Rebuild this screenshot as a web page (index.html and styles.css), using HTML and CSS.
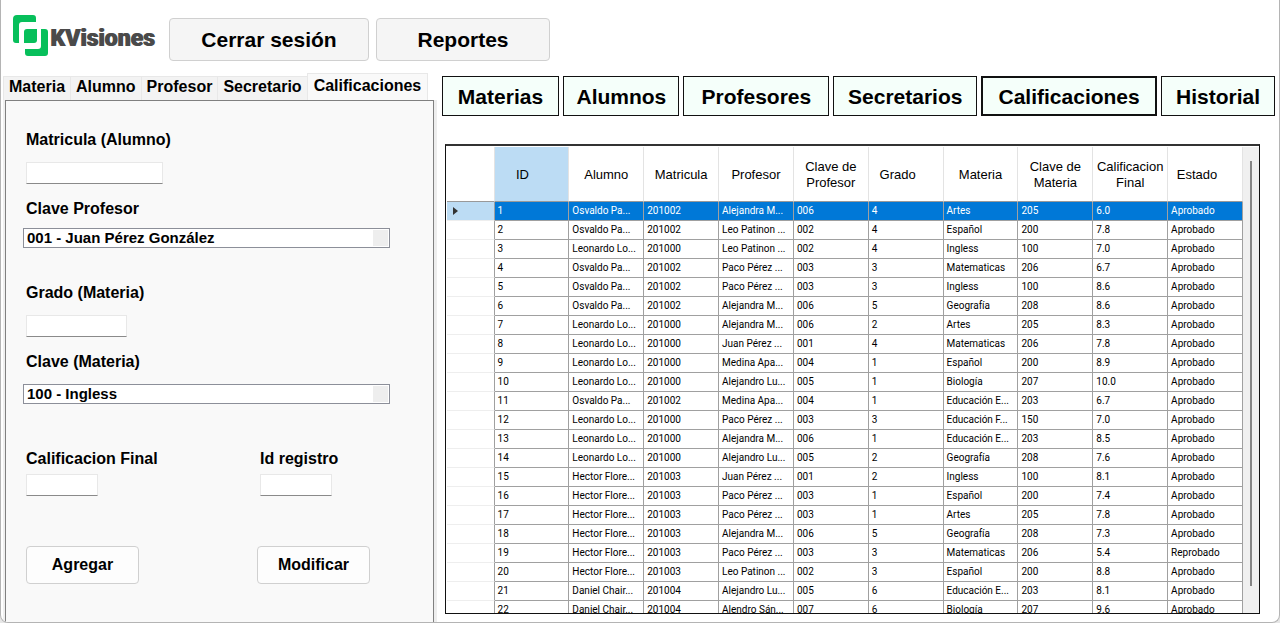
FILE: index.html
```html
<!DOCTYPE html>
<html lang="es">
<head>
<meta charset="utf-8">
<title>KVisiones</title>
<link rel="stylesheet" href="styles.css">
</head>
<body>
<div class="window">
  <header class="topbar">
    <div class="brand">
      <svg class="brand-mark" viewBox="0 0 36 42" aria-hidden="true">
        <path d="M4 0H20Q23 0 23 3V7H9Q6 7 6 10V28H3Q0 28 0 25V4Q0 0 4 0Z" fill="#07bf5b"/>
        <path d="M14 14H24V25Q24 28 21 28H11V17Q11 14 14 14Z" fill="#07bf5b"/>
        <path d="M28 14H32Q35 14 35 17V38Q35 41 32 41H15Q12 41 12 38V34H25Q28 34 28 31Z" fill="#07bf5b"/>
      </svg>
      <span class="brand-name">KVisiones</span>
    </div>
    <button class="top-button logout" type="button">Cerrar sesión</button>
    <button class="top-button reports" type="button">Reportes</button>
  </header>

  <main class="workspace">
    <section class="editor">
      <div class="tabs" role="tablist">
        <button class="tab" role="tab" type="button">Materia</button>
        <button class="tab" role="tab" type="button">Alumno</button>
        <button class="tab" role="tab" type="button">Profesor</button>
        <button class="tab" role="tab" type="button">Secretario</button>
        <button class="tab active" role="tab" type="button" aria-selected="true">Calificaciones</button>
      </div>
      <form class="panel">
        <div class="field">
          <label for="matricula">Matricula (Alumno)</label>
          <input class="wide" id="matricula" type="text">
        </div>
        <div class="field combo">
          <label for="profesor">Clave Profesor</label>
          <select id="profesor"><option>001 - Juan Pérez González</option></select>
        </div>
        <div class="field">
          <label for="grado">Grado (Materia)</label>
          <input class="medium" id="grado" type="text">
        </div>
        <div class="field combo spaced">
          <label for="materia">Clave (Materia)</label>
          <select id="materia"><option>100 - Ingless</option></select>
        </div>
        <div class="pair result">
          <div class="field tight">
            <label for="final">Calificacion Final</label>
            <input class="short" id="final" type="text">
          </div>
          <div class="field tight">
            <label for="registro">Id registro</label>
            <input class="short" id="registro" type="text">
          </div>
        </div>
        <div class="pair actions">
          <button class="action" type="button">Agregar</button>
          <button class="action" type="button">Modificar</button>
        </div>
      </form>
    </section>

    <section class="browser">
      <nav class="views">
        <button class="view" type="button">Materias</button>
        <button class="view" type="button">Alumnos</button>
        <button class="view" type="button">Profesores</button>
        <button class="view" type="button">Secretarios</button>
        <button class="view current" type="button">Calificaciones</button>
        <button class="view" type="button">Historial</button>
      </nav>
      <div class="grid-box">
        <table class="records">
          <colgroup><col class="marker-col"><col span="10"></colgroup>
          <thead>
            <tr>
              <td></td><th class="sorted">ID</th><th>Alumno</th><th>Matricula</th><th>Profesor</th><th>Clave de Profesor</th><th class="glyph-space">Grado</th><th>Materia</th><th>Clave de Materia</th><th>Calificacion Final</th><th class="glyph-space">Estado</th>
            </tr>
          </thead>
          <tbody>
            <tr class="selected"><td><svg class="marker" viewBox="0 0 5 8" aria-hidden="true"><path d="M0 0L5 4L0 8Z" fill="#333"/></svg></td><td>1</td><td>Osvaldo Pa...</td><td>201002</td><td>Alejandra M...</td><td>006</td><td>4</td><td>Artes</td><td>205</td><td>6.0</td><td>Aprobado</td></tr>
            <tr><td></td><td>2</td><td>Osvaldo Pa...</td><td>201002</td><td>Leo Patinon ...</td><td>002</td><td>4</td><td>Español</td><td>200</td><td>7.8</td><td>Aprobado</td></tr>
            <tr><td></td><td>3</td><td>Leonardo Lo...</td><td>201000</td><td>Leo Patinon ...</td><td>002</td><td>4</td><td>Ingless</td><td>100</td><td>7.0</td><td>Aprobado</td></tr>
            <tr><td></td><td>4</td><td>Osvaldo Pa...</td><td>201002</td><td>Paco Pérez ...</td><td>003</td><td>3</td><td>Matematicas</td><td>206</td><td>6.7</td><td>Aprobado</td></tr>
            <tr><td></td><td>5</td><td>Osvaldo Pa...</td><td>201002</td><td>Paco Pérez ...</td><td>003</td><td>3</td><td>Ingless</td><td>100</td><td>8.6</td><td>Aprobado</td></tr>
            <tr><td></td><td>6</td><td>Osvaldo Pa...</td><td>201002</td><td>Alejandra M...</td><td>006</td><td>5</td><td>Geografía</td><td>208</td><td>8.6</td><td>Aprobado</td></tr>
            <tr><td></td><td>7</td><td>Leonardo Lo...</td><td>201000</td><td>Alejandra M...</td><td>006</td><td>2</td><td>Artes</td><td>205</td><td>8.3</td><td>Aprobado</td></tr>
            <tr><td></td><td>8</td><td>Leonardo Lo...</td><td>201000</td><td>Juan Pérez ...</td><td>001</td><td>4</td><td>Matematicas</td><td>206</td><td>7.8</td><td>Aprobado</td></tr>
            <tr><td></td><td>9</td><td>Leonardo Lo...</td><td>201000</td><td>Medina Apa...</td><td>004</td><td>1</td><td>Español</td><td>200</td><td>8.9</td><td>Aprobado</td></tr>
            <tr><td></td><td>10</td><td>Leonardo Lo...</td><td>201000</td><td>Alejandro Lu...</td><td>005</td><td>1</td><td>Biología</td><td>207</td><td>10.0</td><td>Aprobado</td></tr>
            <tr><td></td><td>11</td><td>Osvaldo Pa...</td><td>201002</td><td>Medina Apa...</td><td>004</td><td>1</td><td>Educación E...</td><td>203</td><td>6.7</td><td>Aprobado</td></tr>
            <tr><td></td><td>12</td><td>Leonardo Lo...</td><td>201000</td><td>Paco Pérez ...</td><td>003</td><td>3</td><td>Educación F...</td><td>150</td><td>7.0</td><td>Aprobado</td></tr>
            <tr><td></td><td>13</td><td>Leonardo Lo...</td><td>201000</td><td>Alejandra M...</td><td>006</td><td>1</td><td>Educación E...</td><td>203</td><td>8.5</td><td>Aprobado</td></tr>
            <tr><td></td><td>14</td><td>Leonardo Lo...</td><td>201000</td><td>Alejandro Lu...</td><td>005</td><td>2</td><td>Geografía</td><td>208</td><td>7.6</td><td>Aprobado</td></tr>
            <tr><td></td><td>15</td><td>Hector Flore...</td><td>201003</td><td>Juan Pérez ...</td><td>001</td><td>2</td><td>Ingless</td><td>100</td><td>8.1</td><td>Aprobado</td></tr>
            <tr><td></td><td>16</td><td>Hector Flore...</td><td>201003</td><td>Paco Pérez ...</td><td>003</td><td>1</td><td>Español</td><td>200</td><td>7.4</td><td>Aprobado</td></tr>
            <tr><td></td><td>17</td><td>Hector Flore...</td><td>201003</td><td>Paco Pérez ...</td><td>003</td><td>1</td><td>Artes</td><td>205</td><td>7.8</td><td>Aprobado</td></tr>
            <tr><td></td><td>18</td><td>Hector Flore...</td><td>201003</td><td>Alejandra M...</td><td>006</td><td>5</td><td>Geografía</td><td>208</td><td>7.3</td><td>Aprobado</td></tr>
            <tr><td></td><td>19</td><td>Hector Flore...</td><td>201003</td><td>Paco Pérez ...</td><td>003</td><td>3</td><td>Matematicas</td><td>206</td><td>5.4</td><td>Reprobado</td></tr>
            <tr><td></td><td>20</td><td>Hector Flore...</td><td>201003</td><td>Leo Patinon ...</td><td>002</td><td>3</td><td>Español</td><td>200</td><td>8.8</td><td>Aprobado</td></tr>
            <tr><td></td><td>21</td><td>Daniel Chair...</td><td>201004</td><td>Alejandro Lu...</td><td>005</td><td>6</td><td>Educación E...</td><td>203</td><td>8.1</td><td>Aprobado</td></tr>
            <tr><td></td><td>22</td><td>Daniel Chair...</td><td>201004</td><td>Alendro Sán...</td><td>007</td><td>6</td><td>Biología</td><td>207</td><td>9.6</td><td>Aprobado</td></tr>
          </tbody>
        </table>
        <div class="scrollbar"><div class="thumb"></div></div>
      </div>
    </section>
  </main>
</div>
</body>
</html>
```
FILE: styles.css
```css
* { box-sizing: border-box; }

body {
  margin: 0;
  background: #e6e6e6;
  color: #000;
  font-family: "Liberation Sans", Arial, sans-serif;
}

button, input, select { font: inherit; color: inherit; }
button { padding: 0; font-weight: 700; }

.window {
  display: flex;
  flex-direction: column;
  height: 100vh;
  overflow: hidden;
  background: #fff;
  border: 1px solid #b4b4b4;
  border-top: 0;
  border-radius: 0 0 8px 8px;
}

/* Top bar */
.topbar {
  display: flex;
  flex: none;
  align-items: flex-start;
  height: 73px;
  padding: 15px 12px 0;
}

.brand { display: flex; width: 156px; }
.brand-mark { flex: none; width: 36px; height: 42px; }
.brand-name {
  padding: 11px 0 0 1px;
  font-size: 23px;
  line-height: 26px;
  font-family: Roboto, "Liberation Sans", sans-serif;
  font-weight: 900;
  color: #4a4a4a;
  text-shadow: 1px 0 #4a4a4a;
}

.top-button {
  height: 43px;
  margin-top: 3px;
  font-size: 21px;
  background: #f5f5f5;
  border: 1px solid #d0d0d0;
  border-radius: 4px;
}
.logout { width: 200px; }
.reports { width: 174px; margin-left: 7px; }

/* Workspace */
.workspace { display: flex; flex: 1; min-height: 0; }

.editor {
  display: flex;
  flex-direction: column;
  flex: none;
  width: 34%;
  min-width: 430px;
  padding: 0 2px;
}

.tabs { display: flex; align-items: flex-end; height: 27px; }
.tab {
  height: 24px;
  padding: 0 5px 3px;
  font-size: 16px;
  line-height: 20px;
  background: #f3f3f3;
  border: 1px solid #e8e8e8;
  border-width: 1px 0 0 1px;
}
.tab.active {
  height: 27px;
  padding: 0 6px 3px;
  background: #f9f9f9;
  border-right-width: 1px;
}

.panel {
  flex: 1;
  margin: 0 0 0 2px;
  padding: 29px 20px 0;
  background: #f9f9f9;
  border: 1px solid #808080;
  border-bottom: 0;
  box-shadow: 3px 0 0 #eee, -2px 0 0 #f0f0f0;
  font-size: 16px;
  line-height: 20px;
}

.field { display: flex; flex-direction: column; align-items: flex-start; gap: 12px; margin-bottom: 15px; }
.field label { font-weight: 700; }
.field input {
  height: 22px;
  padding: 0 4px;
  background: #fff;
  border: 1px solid #e8e8e8;
  border-bottom-color: #8a8a8a;
}
.field .wide { width: 137px; }
.field .medium { width: 101px; }
.field .short { width: 72px; }

.combo { gap: 9px; margin-bottom: 35px; }
.combo select {
  width: 367px;
  height: 20px;
  margin-left: -3px;
  padding: 0 20px 0 3px;
  appearance: none;
  font-size: 15px;
  font-weight: 700;
  line-height: 18px;
  background: linear-gradient(#eee, #eee) right 1px center / 15px 16px no-repeat #fff;
  border: 1px solid #8c8f99;
  border-radius: 0;
}
.spaced { gap: 12px; }

.pair { display: grid; grid-template-columns: 234px 1fr; }
.result { margin: 45px 0 50px; }
.actions { grid-template-columns: 231px 1fr; }
.tight { gap: 5px; margin: 0; }

.action {
  width: 113px;
  height: 38px;
  background: #fdfdfd;
  border: 1px solid #d0d0d0;
  border-radius: 4px;
}

/* Record browser */
.browser {
  display: flex;
  flex-direction: column;
  flex: 1;
  min-width: 0;
  padding: 3px 4px 8px 6px;
}

.views {
  display: grid;
  grid-template-columns: 118fr 116fr 146fr 144fr 176fr 114fr;
  gap: 4px;
}
.view {
  height: 40px;
  padding-top: 1px;
  font-size: 21px;
  background: #f5fffa;
  border: 1px solid #111;
}
.view.current { border-width: 2px; }

.grid-box {
  display: flex;
  flex: 1;
  align-items: flex-start;
  min-height: 0;
  margin: 28px 15px 0 3px;
  padding: 1px 0 0 1px;
  overflow: hidden;
  border: 1px solid #111;
  border-top: 2px solid #333;
}

.records {
  flex: 1;
  width: 100%;
  min-width: 0;
  table-layout: fixed;
  border-spacing: 0;
  border-collapse: separate;
}
.marker-col { width: 48px; }

.records th, .records thead td {
  height: 55px;
  padding: 1px 0 0;
  font-size: 13px;
  font-weight: 400;
  line-height: 16px;
  border-right: 1px solid #e3e3e3;
  border-bottom: 1px solid #999;
}
.records .sorted { padding-right: 18px; background: #bcdcf4; }
.records .glyph-space { padding-right: 16px; }

.records tbody td {
  height: 19px;
  padding: 0 3px;
  overflow: hidden;
  white-space: nowrap;
  font-family: Roboto, "Liberation Sans", sans-serif;
  font-size: 10px;
  line-height: 18px;
  border-right: 1px solid #a0a0a0;
  border-bottom: 1px solid #a0a0a0;
}
.records tbody td:first-child { padding-left: 6px; border-bottom-color: #eee; }
.records .selected td { color: #fff; background: #0078d7; }
.records .selected td:first-child { background: #bcdcf4; }
.marker { display: block; width: 5px; height: 8px; }

.scrollbar {
  display: flex;
  justify-content: center;
  align-self: stretch;
  flex: none;
  width: 16px;
  padding: 14px 0 27px;
  background: #f0f0f0;
}
.thumb { width: 2px; background: #858585; }
```
